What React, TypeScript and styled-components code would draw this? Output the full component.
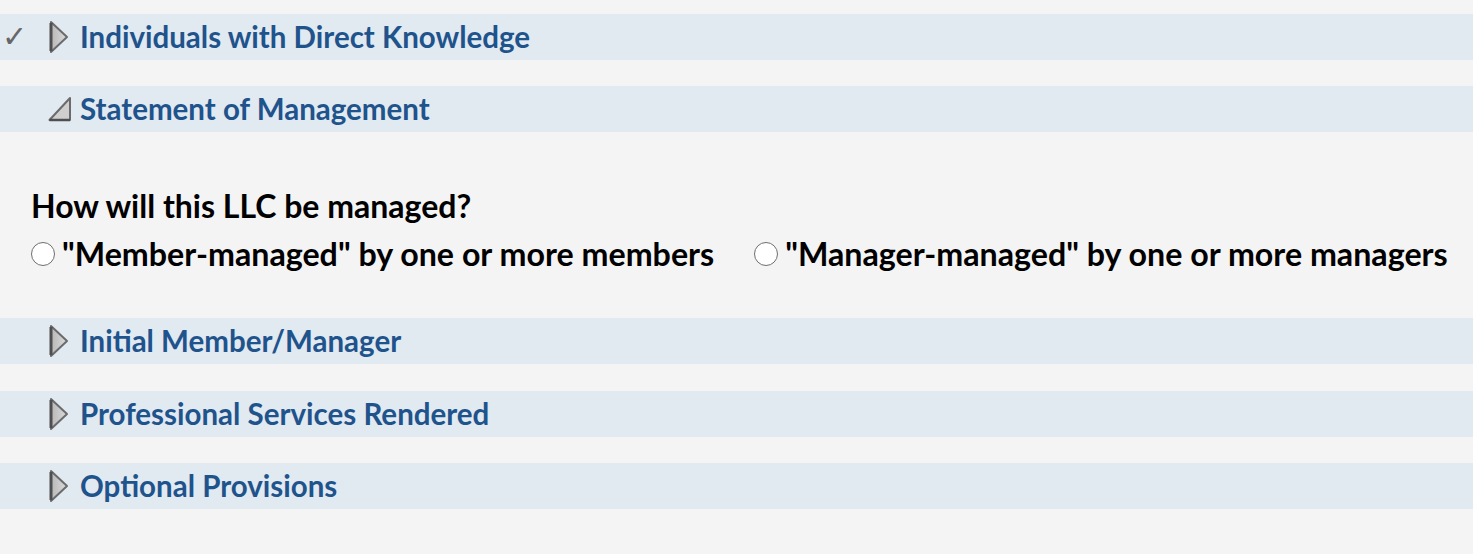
import React from "react";
import styled, { createGlobalStyle } from "styled-components";

const Global = createGlobalStyle`
  html, body { margin: 0; padding: 0; background: #f4f4f4; }
  body { font-family: Lato, "Open Sans", sans-serif; }
`;

const Page = styled.div`
  background: #f4f4f4;
  padding-top: 14px;
  min-height: 554px;
  box-sizing: border-box;
  display: flex;
  flex-direction: column;
`;

const Section = styled.div<{ $gap?: number }>`
  display: flex;
  flex-direction: column;
  margin-bottom: ${(p) => (p.$gap ?? 26)}px;
`;

const Header = styled.div`
  position: relative;
  height: 46px;
  box-sizing: border-box;
  padding-bottom: 2px;
  background: #e1e9f1;
  display: flex;
  align-items: center;
  padding-left: 48px;
  gap: 9px;
`;

const Check = styled.span`
  position: absolute;
  left: 2px;
  top: 7px;
  font-size: 30px;
  line-height: 32px;
  color: #666;
  font-family: "DejaVu Sans", sans-serif;
`;

const Title = styled.span`
  font-family: Lato, sans-serif;
  font-weight: 700;
  font-size: 29.5px;
  color: #1f538c;
`;

const IconBox = styled.span`
  width: 23px;
  height: 34px;
  display: flex;
  align-items: center;
  justify-content: flex-start;
  margin-top: 2px;
`;

const Body = styled.div`
  padding: 56px 0 44px 31px;
  display: flex;
  flex-direction: column;
  gap: 10px;
`;

const Question = styled.div`
  font-weight: 700;
  font-size: 32px;
  line-height: 36px;
  color: #000;
`;

const Options = styled.div`
  display: flex;
  align-items: center;
  gap: 40px;
  height: 40px;
`;

const Option = styled.label`
  display: flex;
  align-items: center;
  gap: 7px;
  font-weight: 700;
  font-size: 32.2px;
  line-height: 40px;
  color: #000;
`;

const Radio = styled.span`
  width: 24px;
  height: 24px;
  border-radius: 50%;
  border: 1.5px solid #6e6e6e;
  background: #fff;
  box-sizing: border-box;
  display: inline-block;
  flex: none;
`;

const Closed = () => (
  <IconBox>
    <svg width="22" height="34" viewBox="0 0 22 34">
      <defs>
        <linearGradient id="tg" x1="0" x2="1" y1="0" y2="0">
          <stop offset="0" stopColor="#b8b8b8" />
          <stop offset="1" stopColor="#dadada" />
        </linearGradient>
      </defs>
      <polygon points="3,2 19,17 3,32" fill="url(#tg)" stroke="#6b6b6b" strokeWidth="2" strokeLinejoin="round" />
      <line x1="3" y1="3" x2="3" y2="31" stroke="#4f4f4f" strokeWidth="3" />
    </svg>
  </IconBox>
);

const Open = () => (
  <IconBox>
    <svg width="23" height="26" viewBox="0 0 23 26">
      <polygon points="1.5,24 22,2 22,24" fill="#cfcfcf" stroke="#6b6b6b" strokeWidth="2" strokeLinejoin="round" />
      <line x1="1.5" y1="24" x2="22" y2="24" stroke="#4f4f4f" strokeWidth="2.5" />
    </svg>
  </IconBox>
);

const Row: React.FC<{ title: string; open?: boolean; done?: boolean }> = ({ title, open, done }) => (
  <Header>
    {done && <Check>✓</Check>}
    {open ? <Open /> : <Closed />}
    <Title>{title}</Title>
  </Header>
);

export default function App() {
  return (
    <>
      <Global />
      <Page>
        <Section>
          <Row title="Individuals with Direct Knowledge" done />
        </Section>
        <Section $gap={0}>
          <Row title="Statement of Management" open />
          <Body>
            <Question>How will this LLC be managed?</Question>
            <Options>
              <Option>
                <Radio />
                "Member-managed" by one or more members
              </Option>
              <Option>
                <Radio />
                "Manager-managed" by one or more managers
              </Option>
            </Options>
          </Body>
        </Section>
        <Section $gap={27}>
          <Row title="Initial Member/Manager" />
        </Section>
        <Section>
          <Row title="Professional Services Rendered" />
        </Section>
        <Section>
          <Row title="Optional Provisions" />
        </Section>
      </Page>
    </>
  );
}
